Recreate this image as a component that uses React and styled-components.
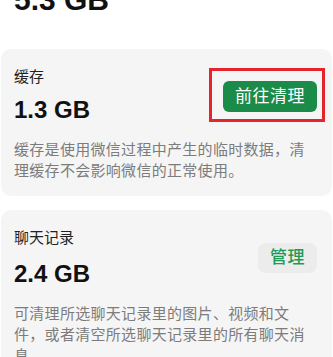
import React from 'react';
import styled, { createGlobalStyle } from 'styled-components';

const Global = createGlobalStyle`
  html, body {
    margin: 0;
    padding: 0;
    background: #ffffff;
    overflow: hidden;
  }
  body {
    font-family: "Liberation Sans", "Noto Sans CJK SC", sans-serif;
  }
`;

const Page = styled.div`
  width: 333px;
  height: 357px;
  overflow: hidden;
  display: flex;
  flex-direction: column;
`;

/* total size at the top, cut off by the screenshot */
const Total = styled.div`
  margin-top: -18px;
  padding-left: 14px;
  font-size: 30px;
  line-height: 36px;
  font-weight: 700;
  color: #111;
`;

const Card = styled.section`
  margin: ${p => p.$top}px 1px 0 1px;
  background: #f5f5f5;
  border-radius: 10px;
  padding: 18px 15px 15px 13px;
  flex-shrink: 0;
`;

const Row = styled.div`
  display: flex;
  justify-content: space-between;
  align-items: flex-start;
`;

const Info = styled.div`
  display: flex;
  flex-direction: column;
  gap: ${p => p.$gap}px;
`;

const Label = styled.div`
  font-size: 15px;
  line-height: 20px;
  color: #222;
`;

const Size = styled.div`
  font-size: 24px;
  line-height: 30px;
  font-weight: 700;
  color: #111;
`;

const Desc = styled.p`
  margin: 14px 0 0 0;
  font-size: 15px;
  line-height: 21px;
  letter-spacing: 0.3px;
  color: #7c7c7c;
  line-break: strict;
`;

const Highlight = styled.div`
  position: relative;
  margin-top: 14px;

  &::after {
    content: '';
    position: absolute;
    top: -13px;
    bottom: -10px;
    left: -14px;
    right: -8px;
    border: 3px solid #e4252b;
  }
`;

const Button = styled.button`
  border: none;
  font-family: inherit;
  font-size: 17px;
  letter-spacing: 0.5px;
  line-height: ${p => p.$h}px;
  height: ${p => p.$h}px;
  padding: 0 12px;
  border-radius: ${p => (p.$primary ? 6 : 8)}px;
  background: ${p => (p.$primary ? '#1a8b48' : '#ececec')};
  color: ${p => (p.$primary ? '#ffffff' : '#1f9a55')};
  font-weight: ${p => (p.$primary ? 400 : 500)};
  margin-top: ${p => p.$mt || 0}px;
  cursor: pointer;
`;

export default function App() {
  return (
    <Page>
      <Global />
      <Total>5.3 GB</Total>

      <Card $top={31}>
        <Row>
          <Info $gap={8}>
            <Label>缓存</Label>
            <Size>1.3 GB</Size>
          </Info>
          <Highlight>
            <Button $primary $h={31}>前往清理</Button>
          </Highlight>
        </Row>
        <Desc>缓存是使用微信过程中产生的临时数据，清理缓存不会影响微信的正常使用。</Desc>
      </Card>

      <Card $top={14}>
        <Row>
          <Info $gap={11}>
            <Label>聊天记录</Label>
            <Size>2.4 GB</Size>
          </Info>
          <Button $h={30} $mt={15}>管理</Button>
        </Row>
        <Desc>可清理所选聊天记录里的图片、视频和文件，或者清空所选聊天记录里的所有聊天消息</Desc>
      </Card>
    </Page>
  );
}
